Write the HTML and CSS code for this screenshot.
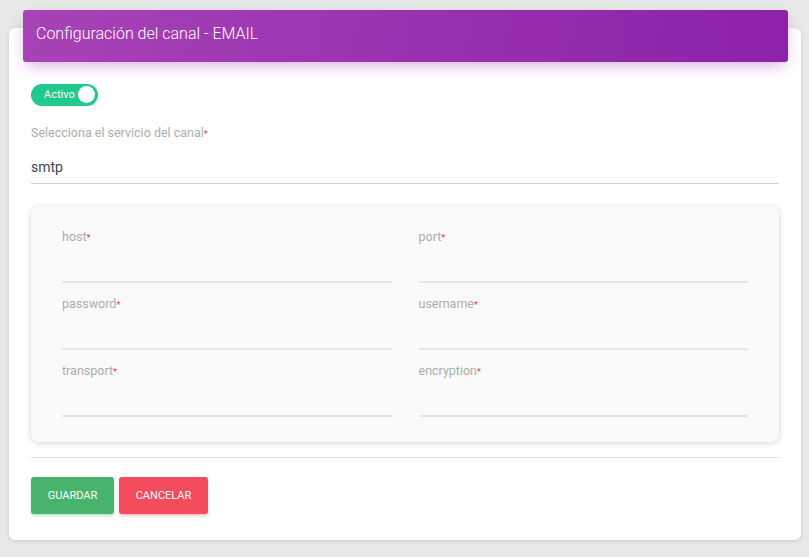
FILE: index.html
```html
<!DOCTYPE html>
<html lang="es">
<head>
    <meta charset="UTF-8">
    <title>Configuración del canal - EMAIL</title>
    <link rel="stylesheet" href="styles.css">
</head>
<body>
    <div class="card">
        <div class="card-header">Configuración del canal - EMAIL</div>

        <div class="card-body">
            <div class="switch">
                <span class="switch-label">Activo</span>
                <span class="switch-knob"></span>
            </div>

            <div class="select-field">
                <label class="field-label">Selecciona el servicio del canal<span class="req">*</span></label>
                <div class="select-value">smtp</div>
            </div>

            <div class="params">
                <div class="field">
                    <label class="field-label">host<span class="req">*</span></label>
                    <div class="field-input"></div>
                </div>
                <div class="field">
                    <label class="field-label">port<span class="req">*</span></label>
                    <div class="field-input"></div>
                </div>
                <div class="field">
                    <label class="field-label">password<span class="req">*</span></label>
                    <div class="field-input"></div>
                </div>
                <div class="field">
                    <label class="field-label">username<span class="req">*</span></label>
                    <div class="field-input"></div>
                </div>
                <div class="field">
                    <label class="field-label">transport<span class="req">*</span></label>
                    <div class="field-input"></div>
                </div>
                <div class="field">
                    <label class="field-label">encryption<span class="req">*</span></label>
                    <div class="field-input"></div>
                </div>
            </div>

            <hr class="divider">

            <div class="actions">
                <button class="btn btn-save">Guardar</button>
                <button class="btn btn-cancel">Cancelar</button>
            </div>
        </div>
    </div>
</body>
</html>
```

FILE: styles.css
```css
body {
    margin: 0;
    padding: 28px 8px 17px 9px;
    background: #e8e8e8;
    font-family: 'Roboto', 'Liberation Sans', sans-serif;
}

.card {
    width: 792px;
    background: #fff;
    border-radius: 6px;
    box-shadow: 0 1px 4px rgba(0,0,0,0.12);
}

.card-header {
    margin: 0 13px 0 14px;
    position: relative;
    top: -18px;
    margin-bottom: -18px;
    height: 52px;
    box-sizing: border-box;
    padding: 14px 13px 0;
    border-radius: 3px;
    background: linear-gradient(100deg, #a843b7 0%, #8b22a9 100%);
    box-shadow: 0 6px 16px -4px rgba(156,39,176,0.45);
    color: #fff;
    font-size: 16px;
    font-weight: 300;
    line-height: 20px;
}

.card-body {
    padding: 21px 22px 26px;
}

.switch {
    display: inline-flex;
    align-items: center;
    width: 67px;
    height: 22px;
    box-sizing: border-box;
    padding: 0 2px 0 13px;
    border-radius: 11px;
    background: #22c98d;
    justify-content: space-between;
}

.switch-label {
    color: #fff;
    font-size: 11px;
}

.switch-knob {
    width: 17px;
    height: 17px;
    margin-right: 1px;
    border-radius: 50%;
    background: #fff;
}

.field-label {
    display: block;
    height: 15px;
    font-size: 12.5px;
    line-height: 15px;
    color: #adadad;
}

.req {
    color: #f33b4c;
    font-size: 9px;
    line-height: 0;
}

.select-field {
    margin-top: 19px;
    border-bottom: 1px solid #d2d2d2;
}

.select-value {
    padding: 18px 0 7px;
    font-size: 14px;
    line-height: 18px;
    color: #3c4858;
}

.params {
    margin-top: 22px;
    padding: 23px 31px 12px;
    display: grid;
    grid-template-columns: 1fr 1fr;
    column-gap: 27px;
    background: #fafafa;
    border-radius: 8px;
    box-shadow: 0 1px 6px rgba(0,0,0,0.18);
}

.field {
    margin-bottom: 12px;
}

.field-input {
    height: 37px;
    border-bottom: 2px solid #e6e6e6;
    margin-bottom: 1px;
}

.divider {
    margin: 15px 0 19px;
    border: none;
    border-top: 1px solid #e2e2e2;
}

.actions {
    display: flex;
    gap: 5px;
}

.btn {
    height: 37px;
    border: none;
    border-radius: 3px;
    color: #fff;
    font-family: inherit;
    font-size: 11px;
    text-transform: uppercase;
    cursor: pointer;
}

.btn-save {
    width: 83px;
    background: #47b36c;
    box-shadow: 0 2px 3px rgba(71,179,108,0.35);
}

.btn-cancel {
    width: 89px;
    background: #f44b5d;
    box-shadow: 0 2px 3px rgba(244,75,93,0.35);
}
```
